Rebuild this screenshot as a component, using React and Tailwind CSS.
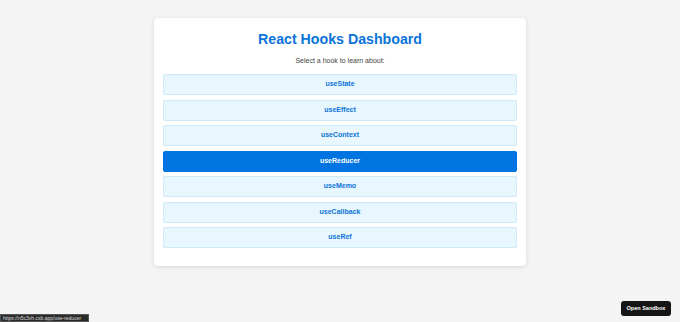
const HOOKS = ["useState", "useEffect", "useContext", "useReducer", "useMemo", "useCallback", "useRef"];

export default function App() {
  const active = "useReducer";
  return (
    <div
      className="relative w-[680px] h-[322px] bg-[#f4f4f4] overflow-hidden"
      style={{ fontFamily: '"Liberation Sans", Arial, sans-serif' }}
    >
      <div className="pt-[18px] flex justify-center">
        <div className="w-[372px] bg-white rounded-[4px] shadow-[0_1px_4px_rgba(0,0,0,0.12)] px-[9px] pt-[11px] pb-[18px]">
          <h1 className="text-center text-[14.2px] leading-[20px] font-bold text-[#0b74d8]">React Hooks Dashboard</h1>
          <p className="text-center text-[7px] leading-[10px] text-[#444] mt-[7px]">Select a hook to learn about:</p>
          <div className="mt-[8px] flex flex-col gap-[4.5px]">
            {HOOKS.map((h) => (
              <div
                key={h}
                className={
                  h === active
                    ? "h-[21px] flex items-center justify-center rounded-[2px] bg-[#0074e0] border border-[#0074e0] text-white text-[7px] font-bold"
                    : "h-[21px] flex items-center justify-center rounded-[2px] bg-[#e8f6fe] border border-[#cfe9f7] text-[#0b74d8] text-[7px] font-bold"
                }
              >
                {h}
              </div>
            ))}
          </div>
        </div>
      </div>

      <div className="absolute left-0 bottom-0 h-[8px] w-[89px] bg-[#2b2b2b] border border-[#555] flex items-center px-[2px] text-[5px] leading-[6px] text-[#ddd] whitespace-nowrap overflow-hidden">
        https://n5c3vh.csb.app/use-reducer
      </div>

      <div className="absolute left-[621px] top-[301px] w-[50px] h-[15px] rounded-[3px] bg-[#151515] flex items-center justify-center text-white text-[5.5px] font-bold">
        Open Sandbox
      </div>
    </div>
  );
}
